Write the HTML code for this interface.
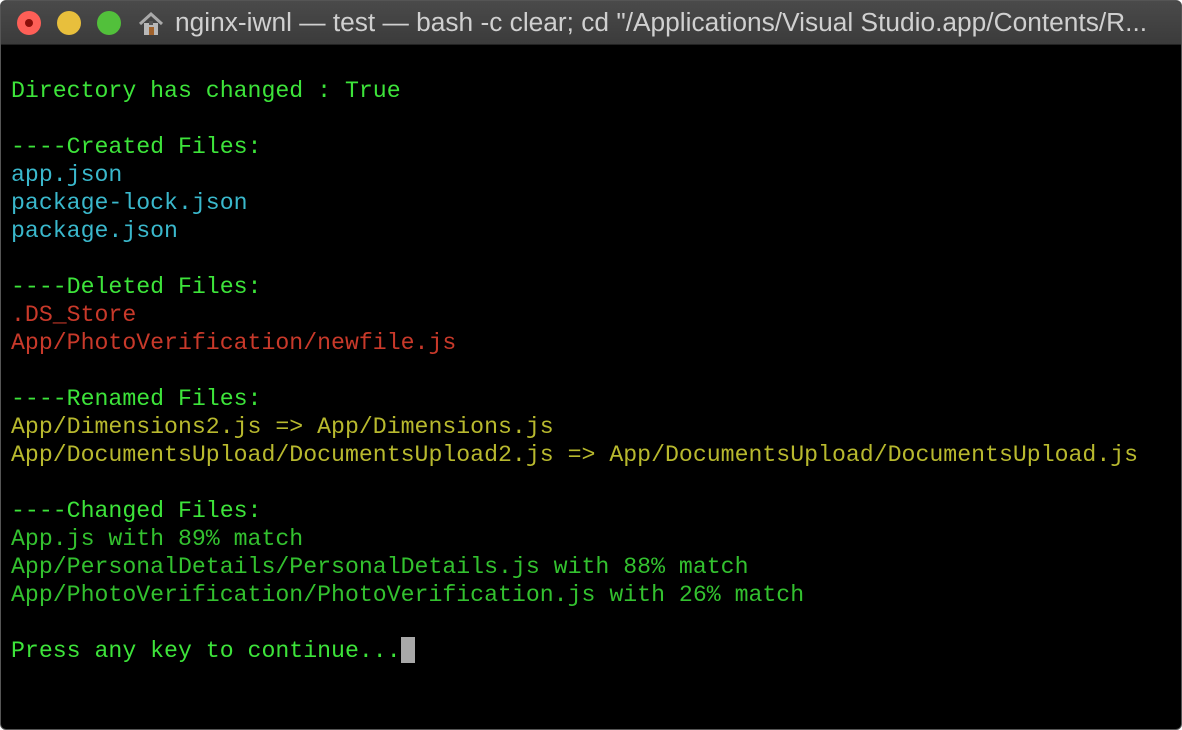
<!DOCTYPE html>
<html><head><meta charset="utf-8"><style>
html,body{margin:0;padding:0;width:1182px;height:730px;overflow:hidden;background:#fff}
.win{position:absolute;left:0;top:0;width:1182px;height:730px;background:#000;border-radius:6px;overflow:hidden;box-sizing:border-box;border:1px solid #555}
.tb{position:absolute;left:0;top:0;width:100%;height:43px;background:linear-gradient(#4a4a4a,#3b3b3b);border-bottom:1px solid #222}
.dot{position:absolute;top:10px;width:24px;height:24px;border-radius:50%}
.t{position:absolute;left:174px;top:6px;font:26.3px "Liberation Sans",sans-serif;color:#d0d0d0;white-space:nowrap}
pre{position:absolute;left:10px;top:76px;margin:0;font:23.2px/28px "Liberation Mono",monospace;color:#3de43a}
.c{color:#3ab8cc}.r{color:#c8392a}.y{color:#b8b92e}.g{color:#33c12f}
.cur{display:inline-block;width:14px;height:26px;background:#a8a8a8;vertical-align:-6px}
</style></head><body><div class="win">
<div class="tb">
<div class="dot" style="left:16px;background:#fe5f57"><div style="position:absolute;left:8px;top:8px;width:8px;height:8px;border-radius:50%;background:#8c0f0a"></div></div>
<div class="dot" style="left:56px;background:#e8bf3c"></div>
<div class="dot" style="left:96px;background:#52c03b"></div>
<svg style="position:absolute;left:137px;top:10px" width="26" height="26" viewBox="0 0 26 26"><path d="M2 13 L13 3 L24 13" fill="none" stroke="#aaa" stroke-width="3"/><rect x="6" y="12" width="14" height="12" fill="#b8b8b8"/><rect x="11" y="16" width="5" height="8" fill="#a0622c"/><rect x="11" y="10" width="4" height="4" fill="#555"/></svg>
<div class="t">nginx-iwnl — test — bash -c clear; cd "/Applications/Visual Studio.app/Contents/R...</div>
</div>
<pre>Directory has changed : True

----Created Files:
<span class="c">app.json
package-lock.json
package.json</span>

----Deleted Files:
<span class="r">.DS_Store
App/PhotoVerification/newfile.js</span>

----Renamed Files:
<span class="y">App/Dimensions2.js =&gt; App/Dimensions.js
App/DocumentsUpload/DocumentsUpload2.js =&gt; App/DocumentsUpload/DocumentsUpload.js</span>

----Changed Files:
<span class="g">App.js with 89% match
App/PersonalDetails/PersonalDetails.js with 88% match
App/PhotoVerification/PhotoVerification.js with 26% match</span>

Press any key to continue...<span class="cur"></span></pre>
</div></body></html>
